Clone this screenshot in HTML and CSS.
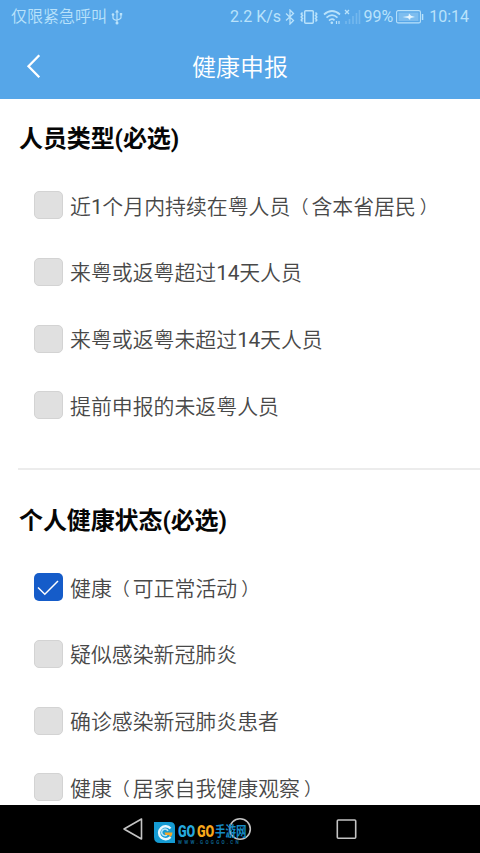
FILE: index.html
```html
<!DOCTYPE html>
<html lang="zh-CN">
<head>
<meta charset="utf-8">
<title>健康申报</title>
<link rel="stylesheet" href="styles.css">
</head>
<body>
<div class="phone">
  <header class="top">
    <div class="status">
      <span class="carrier">仅限紧急呼叫</span>
      <svg class="usb" width="12" height="16" viewBox="0 0 12 16" fill="none" stroke="currentColor" stroke-width="1.2"><path d="M6 2v11M2 6v3q0 1.5 4 2.5M10 5.500v3q0 1.500-4 2.500"/><path d="M4 3.500L6 .5l2 3z" fill="currentColor" stroke="none"/><circle cx="6" cy="14" r="1.500" fill="currentColor" stroke="none"/><circle cx="2" cy="5.500" r="1.300" fill="currentColor" stroke="none"/><path d="M8.800 4h2.400v2.400H8.800z" fill="currentColor" stroke="none"/></svg>
      <span class="speed">2.2 K/s</span>
      <svg class="bt" width="12" height="16" viewBox="0 0 12 16" fill="none" stroke="currentColor" stroke-width="1.300"><path d="M2 4.500l7.500 7L6 15V1l3.500 3.500L2 11.500"/></svg>
      <svg class="vib" width="20" height="16" viewBox="0 0 20 16" fill="none" stroke="currentColor" stroke-width="1.500"><rect x="5.700" y="1.700" width="8.600" height="12.600" rx="1"/><path d="M3.500 3.500l-1.300 1.500 1.300 1.500-1.300 1.500 1.300 1.500-1.300 1.500 1.300 1.500M16.500 3.500l1.300 1.500-1.300 1.500 1.300 1.500-1.300 1.500 1.300 1.500-1.300 1.500"/></svg>
      <svg class="wifi" width="18" height="16" viewBox="0 0 18 16" fill="none" stroke="currentColor" stroke-width="1.700"><path d="M1 5.500q8-7 16 0M3.500 8.700q5.500-5 11 0M6 11.600q3-2.600 5.500-.3"/><circle cx="8.800" cy="13.700" r="1.300" fill="currentColor" stroke="none"/><path d="M13.500 12v3M16 12v3" stroke-width="1.200"/></svg>
      <svg class="signal" width="17" height="16" viewBox="0 0 17 16" fill="none" stroke="currentColor"><path d="M1 1l4 4M5 1L1 5" stroke-width="1.300"/><path d="M2 12v3M5.500 10v5M9 7v8M12.500 4v11M15.500 1v14" stroke-width="1.600" opacity=".3"/></svg>
      <span class="percent">99%</span>
      <svg class="battery" width="28" height="14" viewBox="0 0 28 14"><rect x=".6" y=".6" width="23.800" height="12.300" rx="1.500" fill="none" stroke="currentColor" stroke-width="1.100"/><rect x="2.500" y="2.500" width="20" height="8.500" fill="currentColor" opacity=".4"/><path d="M6.500 7l6-1 .5-2.500 2 2.300L19 7l-4.500 1-.5 2-2-2z" fill="#e6f6ff"/><path d="M25.800 4h1.500v6h-1.500z" fill="currentColor"/></svg>
      <span class="clock">10:14</span>
    </div>
    <div class="titlebar">
      <svg class="back" width="16" height="26" viewBox="0 0 16 26" fill="none" stroke="#fff" stroke-width="2.300"><path d="M13.300 2.200L2.500 13.200l10.800 11"/></svg>
      <h1>健康申报</h1>
    </div>
  </header>
  <main>
    <section class="group">
      <h2>人员类型(必选)</h2>
      <div class="option"><i class="box"></i><span>近<em>1</em>个月内持续在粤人员<b class="open">（</b>含本省居民<b class="close">）</b></span></div>
      <div class="option"><i class="box"></i><span>来粤或返粤超过<em>14</em>天人员</span></div>
      <div class="option"><i class="box"></i><span>来粤或返粤未超过<em>14</em>天人员</span></div>
      <div class="option"><i class="box"></i><span>提前申报的未返粤人员</span></div>
    </section>
    <section class="group second">
      <h2>个人健康状态(必选)</h2>
      <div class="option"><i class="box checked"><svg width="28" height="28" viewBox="0 0 28 28" fill="none" stroke="#fff" stroke-width="1.500"><path d="M4 14.500l6.800 6.700L24 8"/></svg></i><span>健康<b class="open">（</b>可正常活动<b class="close">）</b></span></div>
      <div class="option"><i class="box"></i><span>疑似感染新冠肺炎</span></div>
      <div class="option"><i class="box"></i><span>确诊感染新冠肺炎患者</span></div>
      <div class="option"><i class="box"></i><span>健康<b class="open">（</b>居家自我健康观察<b class="close">）</b></span></div>
    </section>
  </main>
  <nav>
    <svg class="nav-icons" width="480" height="48" viewBox="0 0 480 48" fill="none" stroke="#c4c4c4" stroke-width="1.600"><path d="M124 24l17.500-10v20z" stroke-linejoin="round"/><circle cx="240" cy="24" r="10.300"/><rect x="337.300" y="15" width="18.400" height="18.200" rx="1"/></svg>
    <div class="watermark">
      <svg width="22" height="22" viewBox="0 0 22 22"><path d="M0 0h16q5 0 5 5v16H6q-6 0-6-6z" fill="#159bd3"/><path d="M16.500 6.500A6.500 6.500 0 1 0 16.500 15" fill="none" stroke="#e8f8ff" stroke-width="2.400"/><path d="M14 9A3.300 3.300 0 1 0 13 13" fill="none" stroke="#b9e5f6" stroke-width="1.500"/><path d="M10.500 10.500h8q0 3-2 4.500l-1.500-2h-3.500z" fill="#f4a72c"/></svg>
      <div class="words">
        <div class="brand"><span class="go">GO</span><span class="go orange">GO</span><span class="cn">手游网</span></div>
        <div class="url">WWW.GOGGO.CN</div>
      </div>
    </div>
  </nav>
</div>
</body>
</html>
```
FILE: styles.css
```css
* { box-sizing: border-box; }
body {
  margin: 0;
  background: #fff;
  font-family: "Noto Sans CJK SC", sans-serif;
}
.phone {
  width: 480px;
  height: 853px;
  display: flex;
  flex-direction: column;
  overflow: hidden;
}
.top {
  height: 99px;
  flex: none;
  background: #56a6e8;
}
.status {
  height: 33px;
  padding: 0 11px;
  display: flex;
  align-items: center;
  color: #b9e2fb;
  font: 16px/32px Roboto, "Noto Sans CJK SC", sans-serif;
  white-space: nowrap;
}
.status svg { flex: none; }
.carrier { width: 95px; font-weight: 350; }
.usb { margin-left: 5px; }
.speed { margin-left: 107px; width: 56px; }
.bt { width: 12px; }
.vib { margin-left: 3px; }
.wifi { margin-left: 4px; }
.signal { margin-left: 3px; }
.percent { margin-left: 2px; width: 30px; }
.battery { margin-left: 3px; }
.clock { margin-left: 5px; }
.titlebar {
  height: 66px;
  display: grid;
  grid-template-columns: 60px 1fr 60px;
  align-items: center;
}
.back { margin-left: 26px; }
h1 {
  margin: 0;
  text-align: center;
  color: #fff;
  font-size: 24px;
  line-height: 36px;
  font-weight: 350;
}
main {
  flex: 1;
  min-height: 0;
  overflow: hidden;
}
.group {
  margin-left: 18px;
  height: 371px;
  padding-top: 22px;
  border-bottom: 2px solid #ececec;
}
.second { height: 380px; border: 0; padding-top: 33px; }
h2 {
  margin: 0 0 17px 1px;
  height: 34px;
  font: 700 24px/36px Roboto, "Noto Sans CJK SC", sans-serif;
  letter-spacing: -.1px;
  color: #060606;
}
.option {
  height: 66.67px;
  padding-left: 16px;
  display: flex;
  align-items: center;
  font-family: Roboto, "Noto Sans CJK SC", sans-serif;
  font-size: 20.9px;
  font-weight: 350;
  color: #484848;
  white-space: nowrap;
}
.option span { margin: 3px 0 0 7px; line-height: 30px; }
.option em { font-style: normal; font-weight: 400; letter-spacing: -.3px; }
.option b { font-size: 18px; line-height: 20px; font-weight: inherit; vertical-align: 1px; }
.open { margin-right: 3px; }
.close { margin-left: 4px; }
.box {
  width: 29px;
  height: 28px;
  flex: none;
  border: 1px solid #d3d3d3;
  border-radius: 5px;
  background: #e0e0e0;
}
.checked { border: 0; background: #155cc9; }
.checked svg { display: block; }
nav {
  position: relative;
  height: 48px;
  flex: none;
  background: #000;
}
.nav-icons { display: block; }
.watermark {
  position: absolute;
  left: 154px;
  top: 17px;
  display: flex;
  gap: 2px;
}
.brand {
  display: flex;
  align-items: center;
  height: 18px;
  font: 900 17px/18px Roboto, sans-serif;
}
.go {
  width: 18.500px;
  color: #25a9df;
  display: inline-block;
  transform: scaleX(.74);
  transform-origin: left;
}
.orange { color: #f9a71a; }
.cn {
  color: #168bc5;
  font: 700 10.500px/18px "Noto Sans CJK SC", sans-serif;
  transform: scaleY(1.25);
}
.url {
  font: 700 4.500px/5px Roboto, sans-serif;
  letter-spacing: 2.300px;
  color: #0d638e;
}
```
